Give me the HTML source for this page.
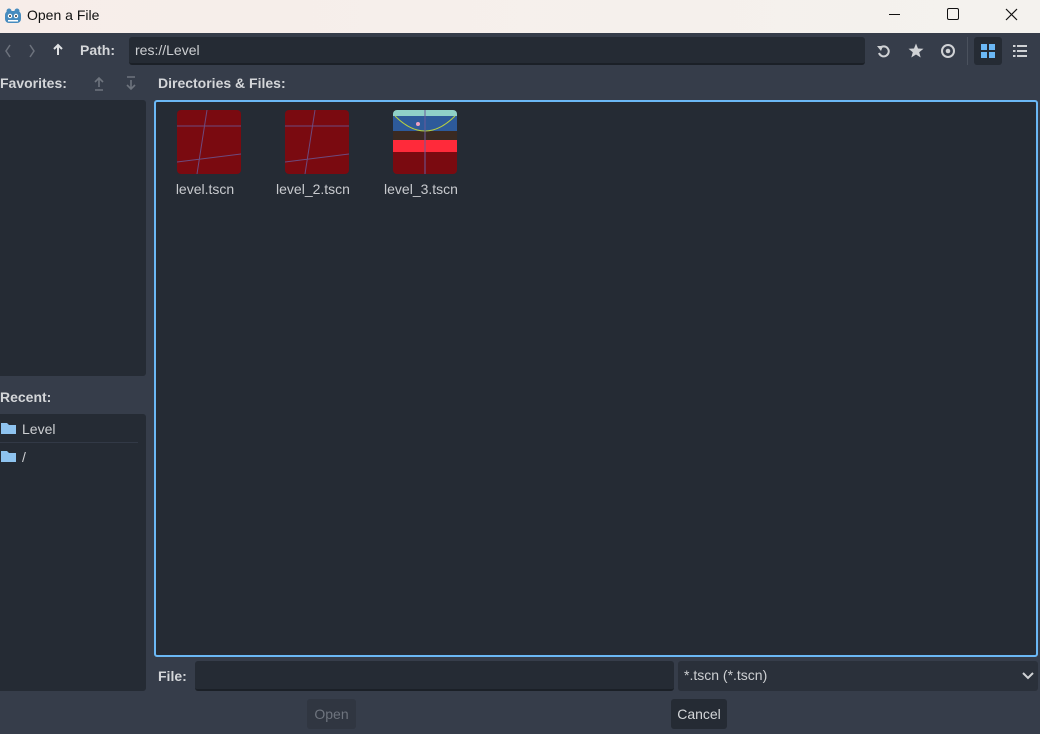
<!DOCTYPE html>
<html><head><meta charset="utf-8"><style>
*{margin:0;padding:0;box-sizing:border-box}
body{width:1040px;height:734px;overflow:hidden;background:#363d4a;font-family:"Liberation Sans","DejaVu Sans",sans-serif;font-size:14px;color:#cdcfd2;position:relative}
.a{position:absolute}
.title{left:0;top:0;width:1040px;height:33px;background:linear-gradient(90deg,#f7ede9,#f4f2ee);color:#111;font-size:14px}
.dark{background:#252b34;border-radius:3px}
.lbl{font-weight:bold;color:#d4d6d9;font-size:14px}
.thumb{width:64px;height:64px;border-radius:4px;background:#7a0a10;overflow:hidden}
.fn{font-size:14px;color:#c8cace;text-align:center;width:108px}
</style></head><body>
<div class="a title">
 <svg class="a" style="left:4px;top:7px" width="18" height="18" viewBox="0 0 18 18"><rect x="1" y="4" width="16" height="12" rx="4" fill="#478cbf"/><circle cx="5" cy="4" r="2.5" fill="#478cbf"/><circle cx="13" cy="4" r="2.5" fill="#478cbf"/><circle cx="6" cy="9" r="2.2" fill="#fff"/><circle cx="12" cy="9" r="2.2" fill="#fff"/><circle cx="6" cy="9" r="1" fill="#333"/><circle cx="12" cy="9" r="1" fill="#333"/><rect x="4" y="13" width="10" height="1.5" fill="#fff"/></svg>
 <div class="a" style="left:27px;top:7px">Open a File</div>
 <div class="a" style="left:889px;top:14px;width:11px;height:1px;background:#111"></div>
 <div class="a" style="left:947px;top:8px;width:12px;height:12px;border:1.3px solid #111;border-radius:2px"></div>
 <svg class="a" style="left:1005px;top:8px" width="13" height="13"><path d="M1 1L12 12M12 1L1 12" stroke="#111" stroke-width="1.2"/></svg>
</div>
<!-- toolbar -->
<svg class="a" style="left:2px;top:43px" width="40" height="16"><path d="M8 2L4 8L8 14M28 2L32 8L28 14" stroke="#6c727c" stroke-width="1.5" fill="none"/></svg>
<svg class="a" style="left:51px;top:43px" width="14" height="14"><path d="M7 2V12M3 6L7 2L11 6" stroke="#e0e2e4" stroke-width="2" fill="none"/></svg>
<div class="a lbl" style="left:80px;top:42px">Path:</div>
<div class="a dark" style="left:129px;top:37px;width:736px;height:28px;border-bottom:2px solid #1b2027"><span class="a" style="left:6px;top:5px;color:#cdcfd2">res://Level</span></div>
<svg class="a" style="left:876px;top:43px" width="16" height="16"><path d="M4 5A5 5 0 1 1 3 10" stroke="#d0d2d5" stroke-width="2" fill="none"/><path d="M1 3L5 8L7 3Z" fill="#d0d2d5"/></svg>
<svg class="a" style="left:908px;top:43px" width="16" height="15"><path d="M8 0.5L10 5.5L15.5 5.8L11.2 9.2L12.7 14.5L8 11.5L3.3 14.5L4.8 9.2L0.5 5.8L6 5.5Z" fill="#d0d2d5"/></svg>
<svg class="a" style="left:940px;top:43px" width="16" height="16"><circle cx="8" cy="8" r="6" stroke="#d0d2d5" stroke-width="2" fill="none"/><circle cx="8" cy="8" r="2.3" fill="#d0d2d5"/></svg>
<div class="a" style="left:967px;top:37px;width:1px;height:28px;background:#4a515d"></div>
<div class="a dark" style="left:974px;top:37px;width:28px;height:28px"></div>
<svg class="a" style="left:981px;top:44px" width="14" height="14"><rect x="0" y="0" width="6" height="6" fill="#6bb8f5"/><rect x="8" y="0" width="6" height="6" fill="#6bb8f5"/><rect x="0" y="8" width="6" height="6" fill="#6bb8f5"/><rect x="8" y="8" width="6" height="6" fill="#6bb8f5"/></svg>
<svg class="a" style="left:1013px;top:44px" width="14" height="14"><g fill="#d0d2d5"><rect x="0" y="1" width="2.5" height="2"/><rect x="4" y="1" width="10" height="2"/><rect x="0" y="6" width="2.5" height="2"/><rect x="4" y="6" width="10" height="2"/><rect x="0" y="11" width="2.5" height="2"/><rect x="4" y="11" width="10" height="2"/></g></svg>
<!-- favorites -->
<div class="a lbl" style="left:0px;top:75px">Favorites:</div>
<svg class="a" style="left:92px;top:75px" width="50" height="17"><path d="M7 3V12M3 7L7 3L11 7M3 15H11M39 5V14M35 10L39 14L43 10M35 2H43" stroke="#6e747e" stroke-width="1.6" fill="none"/></svg>
<div class="a dark" style="left:0;top:100px;width:146px;height:276px;border-radius:0 3px 3px 0"></div>
<div class="a lbl" style="left:0px;top:389px">Recent:</div>
<div class="a dark" style="left:0;top:414px;width:146px;height:277px;border-radius:0 3px 3px 0"></div>
<svg class="a" style="left:1px;top:422px" width="16" height="13"><path d="M0 1H6L8 3H15V12H0Z" fill="#8ec3ef"/></svg>
<div class="a" style="left:22px;top:421px">Level</div>
<div class="a" style="left:0;top:442px;width:138px;height:1px;background:#323946"></div>
<svg class="a" style="left:1px;top:450px" width="16" height="13"><path d="M0 1H6L8 3H15V12H0Z" fill="#8ec3ef"/></svg>
<div class="a" style="left:22px;top:449px">/</div>
<!-- files -->
<div class="a lbl" style="left:158px;top:75px">Directories &amp; Files:</div>
<div class="a" style="left:154px;top:100px;width:884px;height:557px;background:#252b34;border:2px solid #6bb8f5;border-radius:3px"></div>
<div class="a thumb" style="left:177px;top:110px"><svg width="64" height="64"><path d="M30 0L20 64M0 16H64M0 52L64 44" stroke="#6b5a9a" stroke-width="1" opacity=".8"/></svg></div>
<div class="a thumb" style="left:285px;top:110px"><svg width="64" height="64"><path d="M30 0L20 64M0 16H64M0 52L64 44" stroke="#6b5a9a" stroke-width="1" opacity=".8"/></svg></div>
<div class="a thumb" style="left:393px;top:110px;background:linear-gradient(#8fd0c8 0,#8fd0c8 6px,#2d5a9a 6px,#2d5a9a 21px,#3a2a22 21px,#3a2a22 30px,#ff2a3a 30px,#ff2a3a 42px,#7a0a10 42px)"><svg width="64" height="64"><path d="M2 6Q32 36 62 6" stroke="#b8d040" fill="none"/><path d="M32 0V64" stroke="#6b5a9a"/><circle cx="25" cy="14" r="2" fill="#f0a0c0"/></svg></div>
<div class="a fn" style="left:151px;top:181px">level.tscn</div>
<div class="a fn" style="left:259px;top:181px">level_2.tscn</div>
<div class="a fn" style="left:367px;top:181px">level_3.tscn</div>
<!-- bottom -->
<div class="a lbl" style="left:158px;top:668px">File:</div>
<div class="a dark" style="left:195px;top:661px;width:479px;height:30px;border-bottom:2px solid #1b2027"></div>
<div class="a dark" style="left:678px;top:661px;width:360px;height:30px;background:#2a303a"><span class="a" style="left:6px;top:6px">*.tscn (*.tscn)</span>
<svg class="a" style="left:344px;top:10px" width="12" height="10"><path d="M1 2L6 7L11 2" stroke="#d0d2d5" stroke-width="2" fill="none"/></svg></div>
<div class="a" style="left:307px;top:699px;width:49px;height:30px;background:#303641;border-radius:3px;color:#6e747e;text-align:center;line-height:30px">Open</div>
<div class="a" style="left:671px;top:699px;width:56px;height:30px;background:#252b34;border-radius:3px;color:#d4d6d9;text-align:center;line-height:30px">Cancel</div>
</body></html>
